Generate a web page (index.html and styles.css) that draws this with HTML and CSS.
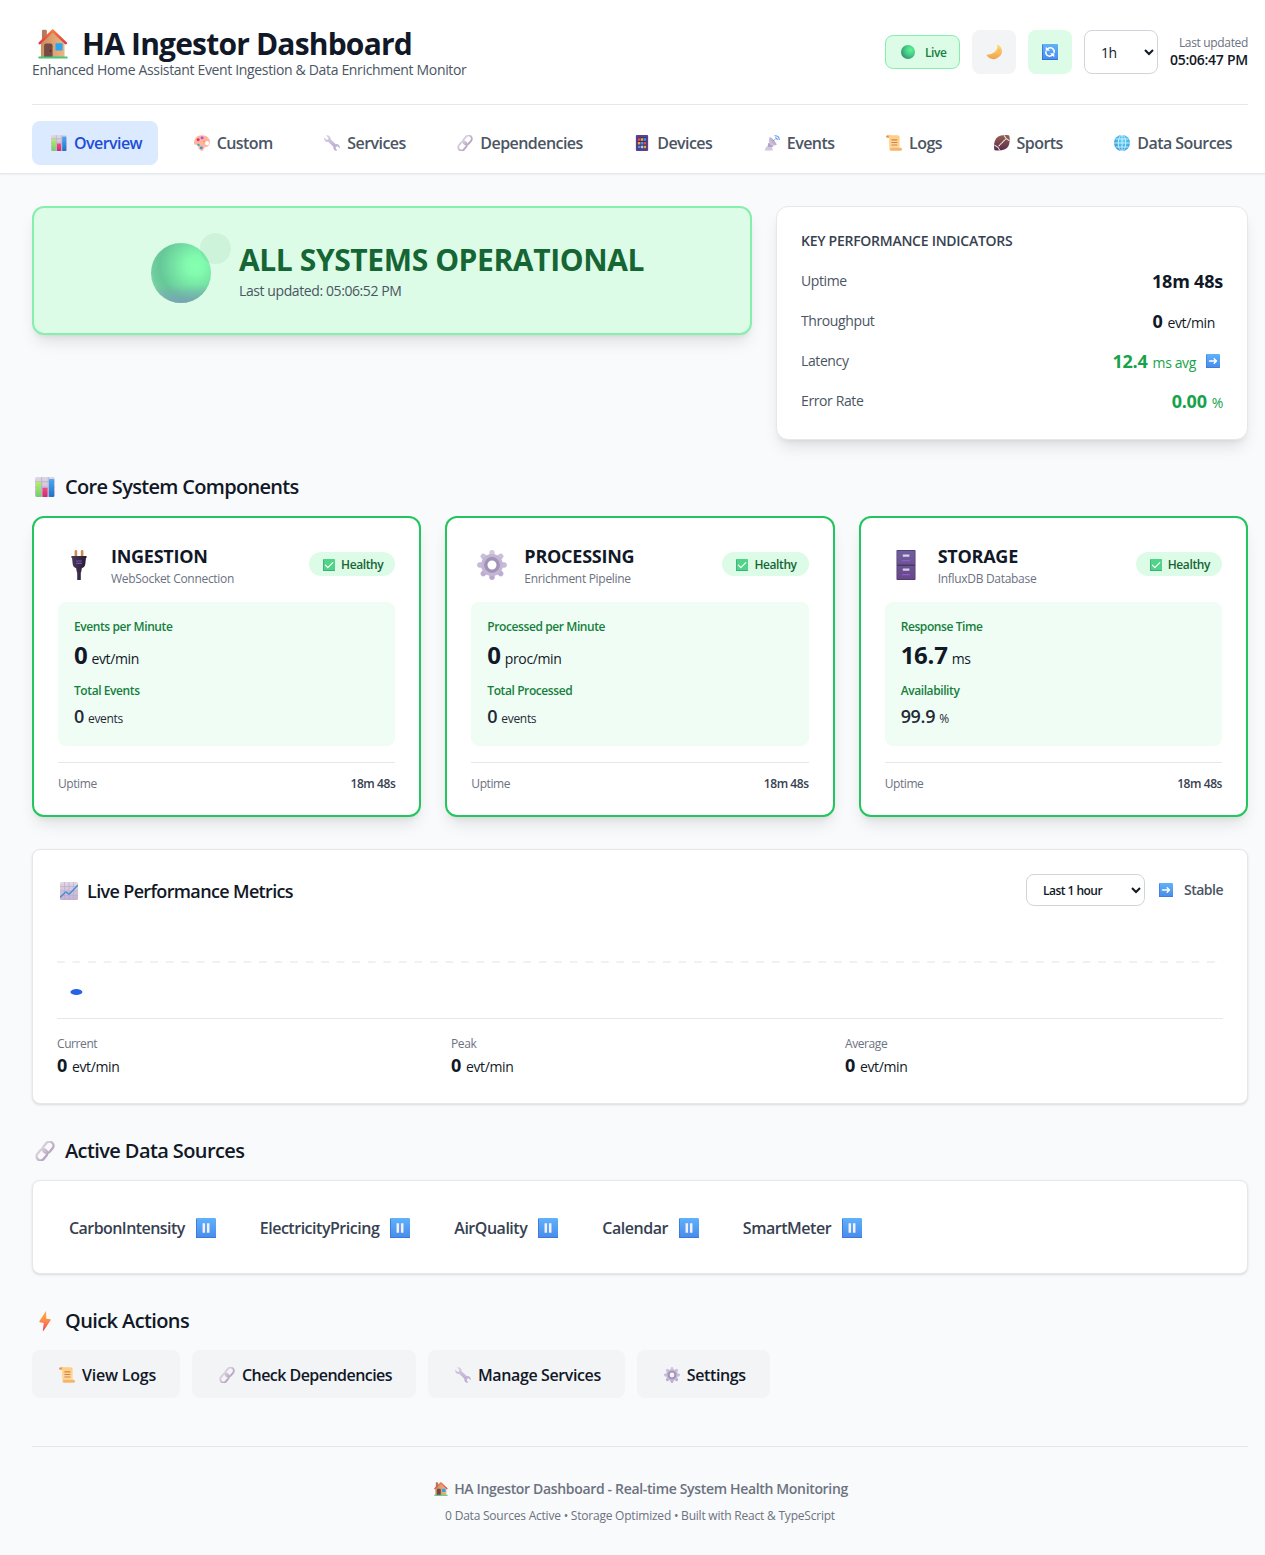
FILE: index.html
```
<!DOCTYPE html>
<html lang="en">
<head>
<meta charset="utf-8">
<title>HA Ingestor Dashboard</title>
<link rel="stylesheet" href="styles.css">
</head>
<body>
<svg class="sprite" aria-hidden="true">
  <defs>
    <linearGradient id="g-wall" x1="0" y1="0" x2="1" y2="0"><stop offset="0" stop-color="#c98f63"/><stop offset="1" stop-color="#eeb583"/></linearGradient>
    <linearGradient id="g-roof" x1="0" y1="0" x2="0" y2="1"><stop offset="0" stop-color="#f97a3d"/><stop offset="1" stop-color="#d93a40"/></linearGradient>
    <linearGradient id="g-green" x1="0" y1="0" x2="0" y2="1"><stop offset="0" stop-color="#b4ee6a"/><stop offset="1" stop-color="#6fd06c"/></linearGradient>
    <linearGradient id="g-pink" x1="0" y1="0" x2="0" y2="1"><stop offset="0" stop-color="#f5488a"/><stop offset="1" stop-color="#cf2b6b"/></linearGradient>
    <linearGradient id="g-blue" x1="0" y1="0" x2="0" y2="1"><stop offset="0" stop-color="#4aa9f5"/><stop offset="1" stop-color="#1f72c6"/></linearGradient>
    <linearGradient id="g-key" x1="0" y1="0" x2="0" y2="1"><stop offset="0" stop-color="#5fb2fb"/><stop offset="1" stop-color="#478bea"/></linearGradient>
    <linearGradient id="g-steel" x1="0" y1="0" x2="0" y2="1"><stop offset="0" stop-color="#d9d0e3"/><stop offset="1" stop-color="#b6a3cf"/></linearGradient>
    <linearGradient id="g-link" x1="0" y1="0" x2="0" y2="1"><stop offset="0" stop-color="#d8cfdc"/><stop offset="1" stop-color="#b9a5c4"/></linearGradient>
    <linearGradient id="g-paper" x1="0" y1="0" x2="0" y2="1"><stop offset="0" stop-color="#ffcb80"/><stop offset="1" stop-color="#ffdc9a"/></linearGradient>
    <linearGradient id="g-ball" x1="0" y1="0" x2="0" y2="1"><stop offset="0" stop-color="#95614f"/><stop offset="1" stop-color="#5b2a4c"/></linearGradient>
    <linearGradient id="g-moon" x1="0" y1="0" x2="0" y2="1"><stop offset="0" stop-color="#ffdf77"/><stop offset="1" stop-color="#f3a04f"/></linearGradient>
    <linearGradient id="g-zap" x1="0" y1="0" x2="0" y2="1"><stop offset="0" stop-color="#fbab3f"/><stop offset=".5" stop-color="#ff8b4a"/><stop offset="1" stop-color="#ee3f5c"/></linearGradient>
    <linearGradient id="g-cab" x1="0" y1="0" x2="0" y2="1"><stop offset="0" stop-color="#6e5f9e"/><stop offset="1" stop-color="#684788"/></linearGradient>
    <linearGradient id="g-plug" x1="0" y1="0" x2="1" y2="0"><stop offset="0" stop-color="#4a3a5c"/><stop offset="1" stop-color="#251c31"/></linearGradient>
    <linearGradient id="g-board" x1="0" y1="0" x2="0" y2="1"><stop offset="0" stop-color="#ded8e4"/><stop offset="1" stop-color="#c3b1d2"/></linearGradient>
    <radialGradient id="g-orb" cx=".74" cy=".38" r=".82"><stop offset="0" stop-color="#85ffb0"/><stop offset=".18" stop-color="#82fbae"/><stop offset=".72" stop-color="#66c798"/><stop offset=".86" stop-color="#6ecd9d"/><stop offset="1" stop-color="#93d9ab"/></radialGradient>
    <linearGradient id="g-orb-low" x1="0" y1="0" x2="0" y2="1"><stop offset=".7" stop-color="#7b9dba" stop-opacity="0"/><stop offset="1" stop-color="#7b9dba" stop-opacity=".85"/></linearGradient>
    <radialGradient id="g-orb-sm" cx=".68" cy=".35" r=".72"><stop offset="0" stop-color="#5df396"/><stop offset=".5" stop-color="#46cf86"/><stop offset="1" stop-color="#358f77"/></radialGradient>
    <radialGradient id="g-globe" cx=".55" cy=".35" r=".7"><stop offset="0" stop-color="#5fd6fc"/><stop offset="1" stop-color="#3196d6"/></radialGradient>
  </defs>

  <symbol id="i-house" viewBox="1 1.500 30.500 30">
    <path fill="#b37a5b" d="M5 3.200Q5 2 6.200 2h2.400Q10 2 10 3.200V13H5z"/>
    <path fill="url(#g-wall)" d="M4 16 16 4l12 12v14H4z"/>
    <path fill="none" stroke="url(#g-roof)" stroke-width="2.700" stroke-linejoin="round" stroke-linecap="round" d="M2.800 15.600 16 3l13.200 12.600"/>
    <path fill="#774b43" d="M7.200 18.200Q7.200 16 9.400 16h4.200q2.200 0 2.200 2.200V30H7.200z"/>
    <circle cx="13.800" cy="23.500" r=".8" fill="#3e2633"/>
    <rect x="18.800" y="15.800" width="7.200" height="7.400" rx=".9" fill="#27a7f0"/>
    <rect x="1.200" y="29.200" width="30" height="2" rx="1" fill="#43c879"/>
  </symbol>

  <symbol id="i-bars" viewBox="1 1 30 30">
    <rect x="1" y="1" width="30" height="30" rx="2.500" fill="url(#g-board)"/>
    <path stroke="#b6a5c4" stroke-width="1" d="M11 1v30M21 1v30M1 8h30M1 16h30M1 24h30"/>
    <rect x="2.500" y="8" width="7.500" height="23" rx="1" fill="url(#g-green)"/>
    <rect x="12.200" y="17" width="7.500" height="14" rx="1" fill="url(#g-pink)"/>
    <rect x="22" y="4" width="7.500" height="27" rx="1" fill="url(#g-blue)"/>
  </symbol>

  <symbol id="i-chart" viewBox="1 1 30 30">
    <rect x="1" y="1" width="30" height="30" rx="2.500" fill="url(#g-board)"/>
    <path stroke="#bba9c9" stroke-width="1.100" d="M8.500 1v30M16 1v30M23.500 1v30M1 8.500h30M1 16h30M1 23.500h30"/>
    <path fill="none" stroke="#3d8fd9" stroke-width="2.300" d="m1 27 9-9q1-.8 2 .2l3 2.600q1 .8 2-.2L31 6"/>
  </symbol>

  <symbol id="i-palette" viewBox="1 1 30.500 30.500">
    <path fill="#ffb4a0" fill-rule="evenodd" d="M15 1.500C6 2 1 9 1 17c0 2 2.500 3 4.500 2.500 3-.5 4.500 1 4 4-.6 4.500 2.500 7.500 7.500 7.500 1.700 0 2-2 2.500-4 .6-2 2.500-3 4.500-3 4.600 0 7.500-4.500 7.500-9.500C31.500 6.500 24 1 15 1.500zM24.500 13a4 4 0 1 1 0 7.200 4 4 0 0 1 0-7.200z"/>
    <circle cx="16.500" cy="6.500" r="2.800" fill="#b04fe0"/>
    <circle cx="9" cy="10" r="2.800" fill="#e02f6c"/>
    <circle cx="20" cy="13.500" r="2" fill="#f8a34a"/>
    <circle cx="9.500" cy="20" r="2.300" fill="#2fb8b4"/>
    <circle cx="15" cy="25.500" r="2.700" fill="#3e8fe6"/>
  </symbol>

  <symbol id="i-wrench" viewBox="0.500 1 31 31">
    <path fill="url(#g-steel)" d="M4.500 2 9 6.200 8.300 9.600 5 10.300.9 6C0 11 3.500 15 8.500 14.300L18.700 24c-.6 5 3 8 8 6.800L22.900 27l.8-3.300 3.300-.9 4 3.900c1-5-2.800-8.800-7.500-7.900L13.300 9C14 4.300 9.500.500 4.500 2z"/>
  </symbol>

  <symbol id="i-link" viewBox="0 0 32 32">
    <g fill="none" stroke-width="3.800" stroke="url(#g-link)" transform="rotate(-50 16 16)">
      <rect x="-1.500" y="9.500" width="19.500" height="13" rx="6.500"/>
      <rect x="14" y="9.500" width="19.500" height="13" rx="6.500"/>
      <path d="M10.500 16.100h11"/>
    </g>
  </symbol>

  <symbol id="i-phone" viewBox="1 1 30 30">
    <rect x="4.500" y="1" width="23" height="30" rx="2" fill="#57438f"/>
    <path fill="#3d2d63" d="M7.500 5.500h17v22h-17z"/>
    <path fill="#f0484f" d="M8.200 7h4.600v5H8.200zM19.200 14h4.600v5h-4.600z"/>
    <path fill="#f6a33d" d="M13.700 7h4.600v5h-4.600zM8.200 14h4.600v5H8.200zM19.200 21h4.600v5h-4.600z"/>
    <path fill="#3d9bf2" d="M19.200 7h4.600v5h-4.600zM13.700 14h4.600v5h-4.600zM8.200 21h4.600v5H8.200z"/>
    <path fill="#9ad3f5" d="M13.700 21h4.600v5h-4.600z"/>
  </symbol>

  <symbol id="i-dish" viewBox="1 0 31 32">
    <path fill="#d3c8de" d="M1.500 31 5 23.500h11L18.500 31z"/>
    <path fill="#b4a2c6" d="M9 16h8l1.500 8H7.500z"/>
    <path fill="#cdc1d8" d="M12 4Q7.500 14 13 19.500q6 4 13-.5z"/>
    <path fill="#bfb0ce" d="M12 4q9 4 14 15-4 1-7-1.500Q12.500 12 12 4z"/>
    <path stroke="#8d7da8" stroke-width="1.600" d="m18.500 12.500 4.500-4.500"/>
    <g fill="none" stroke="#5d9cf5" stroke-width="2.200"><path d="M22.500 5.500q4.500 0 4.500 4.500"/><path d="M21.500 1.500q9.500-.5 9.500 8.500"/></g>
  </symbol>

  <symbol id="i-scroll" viewBox="1 1 30.500 30">
    <path fill="#e9914f" d="M1 4q0-3 3-3h5v5H4Q1 6 1 4z"/>
    <path fill="url(#g-paper)" d="M4 1h19q4 0 4 4v22H10q-3 0-3-3V6q0-4-3-5z"/>
    <path fill="#f5b56c" d="M9 25h20q2.500 0 2.500 3t-3 3H11q-4 0-4-5 0 2 2 2z"/>
    <path stroke="#cf8459" stroke-width="2" stroke-linecap="round" d="M12 10h10M12 15h10M12 20h10"/>
  </symbol>

  <symbol id="i-ball" viewBox="1 1 30.500 30.500">
    <path fill="url(#g-ball)" d="M30 2C20 0 10 2 5.500 7 1 12.500 0 22 2 30c10 2 20 0 24.500-5C31 19.500 32 10 30 2z"/>
    <path fill="none" stroke="#e9dce5" stroke-width="2" d="M20 1.500Q23 9 30.500 12M1.700 20Q9 23 12 30.500"/>
    <path stroke="#fff" stroke-width="2" stroke-linecap="round" stroke-dasharray="1.800 2.400" d="m10.500 21.500 12-12"/>
  </symbol>

  <symbol id="i-globe" viewBox="1 1 30 30">
    <circle cx="16" cy="16" r="15" fill="url(#g-globe)"/>
    <g fill="none" stroke="#d8f3ff" stroke-width="1.600"><ellipse cx="16" cy="16" rx="7" ry="15"/><path d="M16 1v30M1 16h30M4 8.500h24M4 23.500h24"/></g>
  </symbol>

  <symbol id="i-moon" viewBox="1 1 30.500 30.500">
    <path fill="url(#g-moon)" d="M22 1.500c2.500 10-4 18.500-20.500 20C5 28.500 13 31.500 20 29c10-3.500 14-13 10-20.500-1.500-3-4-5.500-8-7z"/>
    <circle cx="26" cy="13" r="1.600" fill="#eeb25a"/><circle cx="19" cy="24" r="2" fill="#eeaf58"/>
  </symbol>

  <symbol id="i-refresh" viewBox="1 1 30 30">
    <rect x="1" y="1" width="30" height="30" rx="2" fill="url(#g-key)"/>
    <path fill="#2f69cf" d="M1 29.500h30V31H1zM1 2h1.300v28H1z"/>
    <g fill="none" stroke="#fff" stroke-width="2.800"><path d="M11 10.500Q16.500 6.500 21 9.500q4 3 2.500 8"/><path d="M21 21.500Q15.500 25.500 11 22.500q-4-3-2.500-8"/></g>
    <path fill="#fff" d="M8 6v7.500h8zM24 26v-7.500h-8z"/>
  </symbol>

  <symbol id="i-right" viewBox="1 1 30 30">
    <rect x="1" y="1" width="30" height="30" rx="2" fill="url(#g-key)"/>
    <path fill="#3f77d8" d="M1 29.500h30V31H1zM1 2h1.300v28H1z"/>
    <path fill="none" stroke="#fff" stroke-width="3" stroke-linecap="round" stroke-linejoin="round" d="M8.500 16h15M18.500 11l5 5-5 5"/>
  </symbol>

  <symbol id="i-pause" viewBox="1 1 30 30">
    <rect x="1" y="1" width="30" height="30" rx="2" fill="url(#g-key)"/>
    <path fill="#3f77d8" d="M1 29.500h30V31H1zM1 2h1.300v28H1z"/>
    <path fill="#f5efff" d="M10.800 9h3.800v14h-3.800zM17.400 9h3.800v14h-3.800z"/>
  </symbol>

  <symbol id="i-check" viewBox="1 1 30 30">
    <rect x="1" y="1" width="30" height="30" rx="1.500" fill="#52d38a"/>
    <path fill="#3da374" d="M1 29h30v2H1zM1 2h1.500v28H1z"/>
    <path fill="none" stroke="#fff" stroke-width="3" stroke-linecap="round" stroke-linejoin="round" d="m7 16.500 6 6.200L25.500 10"/>
  </symbol>

  <symbol id="i-plug" viewBox="1 1 30 30">
    <path fill="#c98a58" d="M11.600 2q0-1 1.300-1t1.300 1v7h-2.600zM17.800 2q0-1 1.300-1t1.300 1v7h-2.600z"/>
    <path fill="url(#g-plug)" d="M9 7h14q.8 0 .8.900t-.8.900l-.7 6.200q-.4 3.300-3.500 4.200h-5.600q-3.100-.9-3.500-4.200L9 8.800q-.8 0-.8-.9T9 7zM13.100 19h5.800l-.8 4.500h-4.200zM14.200 23.500h3.600V31h-3.600z"/>
    <path stroke="#7a52b5" stroke-width="1.200" stroke-linecap="round" d="M13.500 12h5M13.500 14.300h5"/>
  </symbol>

  <symbol id="i-gear" viewBox="1 1 30 30">
    <g stroke-width="5.400" stroke-linecap="round"><path stroke="#d2c9de" d="M16 3.800v3"/><path stroke="#b9a8d3" d="M16 25.200v3"/><path stroke="#c7bbd9" d="M3.800 16h3M25.200 16h3"/><path stroke="#cabfdb" d="m7.300 7.300 2.200 2.200M24.700 7.300l-2.200 2.200"/><path stroke="#bcadd4" d="m7.300 24.700 2.200-2.200M24.700 24.700l-2.200-2.200"/></g>
    <circle cx="16" cy="16" r="8.200" fill="none" stroke="#c3b6d5" stroke-width="5.500"/>
    <circle cx="16" cy="16" r="6.200" fill="none" stroke="#a292b5" stroke-width="3.400"/>
  </symbol>

  <symbol id="i-cabinet" viewBox="1 1 30 30">
    <rect x="6.500" y="1" width="19" height="30" rx=".8" fill="#4b3868"/>
    <path fill="url(#g-cab)" d="M7.200 1.700h17.600v13.700H7.200zM7.200 17h17.600v13.300H7.200z"/>
    <path fill="#d9d0e6" d="M12.800 5.500h6.600v2.200h-6.600zM12.800 19.500h6.600v2.200h-6.600z"/>
    <path fill="#8f5dd0" d="M12 11h8v1.300h-8zM12 25h8v1.300h-8z"/>
  </symbol>

  <symbol id="i-zap" viewBox="1 1 30 30">
    <path fill="url(#g-zap)" d="M17.500 1 7.500 16.500q-.4 1 .6 1.500l6 1-1.500 12 1.200-.2L24.500 14.800q.5-1.200-.6-1.400L18 12.500z"/>
  </symbol>

  <symbol id="i-orb" viewBox="0 0 60 60"><circle cx="30" cy="30" r="30" fill="url(#g-orb)"/><circle cx="30" cy="30" r="30" fill="url(#g-orb-low)"/></symbol>
  <symbol id="i-orb-sm" viewBox="1 1 30 30"><circle cx="16" cy="16" r="15" fill="url(#g-orb-sm)"/></symbol>
</svg>

<header class="header">
  <div class="header-top">
    <div>
      <h1 class="title"><svg class="ico ico-30"><use href="#i-house"/></svg><span>HA Ingestor Dashboard</span></h1>
      <p class="subtitle">Enhanced Home Assistant Event Ingestion &amp; Data Enrichment Monitor</p>
    </div>
    <div class="controls">
      <div class="live"><svg class="ico ico-14"><use href="#i-orb-sm"/></svg><span>Live</span></div>
      <button class="icon-btn"><svg class="ico ico-16"><use href="#i-moon"/></svg></button>
      <button class="icon-btn icon-btn-on"><svg class="ico ico-16"><use href="#i-refresh"/></svg></button>
      <select class="select select-range"><option>1h</option></select>
      <div class="updated"><div class="updated-label">Last updated</div><div class="updated-time">05:06:47 PM</div></div>
    </div>
  </div>
  <nav class="tabs">
    <a class="tab tab-active"><svg class="ico ico-16"><use href="#i-bars"/></svg>Overview</a>
    <a class="tab"><svg class="ico ico-16"><use href="#i-palette"/></svg>Custom</a>
    <a class="tab"><svg class="ico ico-16"><use href="#i-wrench"/></svg>Services</a>
    <a class="tab"><svg class="ico ico-16"><use href="#i-link"/></svg>Dependencies</a>
    <a class="tab"><svg class="ico ico-16"><use href="#i-phone"/></svg>Devices</a>
    <a class="tab"><svg class="ico ico-16"><use href="#i-dish"/></svg>Events</a>
    <a class="tab"><svg class="ico ico-16"><use href="#i-scroll"/></svg>Logs</a>
    <a class="tab"><svg class="ico ico-16"><use href="#i-ball"/></svg>Sports</a>
    <a class="tab"><svg class="ico ico-16"><use href="#i-globe"/></svg>Data Sources</a>
  </nav>
</header>

<main class="main">
  <section class="hero">
    <div class="status">
      <div class="orb"><svg class="orb-ball"><use href="#i-orb"/></svg><span class="orb-ping"></span></div>
      <div>
        <h2 class="status-title">ALL SYSTEMS OPERATIONAL</h2>
        <p class="status-sub">Last updated: 05:06:52 PM</p>
      </div>
    </div>
    <div class="kpi">
      <h3 class="kpi-title">KEY PERFORMANCE INDICATORS</h3>
      <div class="kpi-row"><span class="kpi-label">Uptime</span><span class="kpi-value">18m 48s</span></div>
      <div class="kpi-row"><span class="kpi-label">Throughput</span><span class="kpi-value kpi-gap">0 <small>evt/min</small></span></div>
      <div class="kpi-row"><span class="kpi-label">Latency</span><span class="kpi-value good">12.4 <small>ms avg</small><svg class="ico ico-14 trend"><use href="#i-right"/></svg></span></div>
      <div class="kpi-row"><span class="kpi-label">Error Rate</span><span class="kpi-value good">0.00 <small>%</small></span></div>
    </div>
  </section>

  <section class="section">
    <h2 class="heading"><svg class="ico ico-20"><use href="#i-bars"/></svg>Core System Components</h2>
    <div class="cards">
      <article class="card">
        <div class="card-head">
          <svg class="ico ico-32"><use href="#i-plug"/></svg>
          <div class="card-name"><h3>INGESTION</h3><p>WebSocket Connection</p></div>
          <span class="badge"><svg class="ico ico-12"><use href="#i-check"/></svg>Healthy</span>
        </div>
        <div class="stats">
          <div class="stat-label">Events per Minute</div><div class="stat-main">0 <small>evt/min</small></div>
          <div class="stat-label stat-second">Total Events</div><div class="stat-sub">0 <small>events</small></div>
        </div>
        <div class="card-foot"><span>Uptime</span><b>18m 48s</b></div>
      </article>
      <article class="card">
        <div class="card-head">
          <svg class="ico ico-32"><use href="#i-gear"/></svg>
          <div class="card-name"><h3>PROCESSING</h3><p>Enrichment Pipeline</p></div>
          <span class="badge"><svg class="ico ico-12"><use href="#i-check"/></svg>Healthy</span>
        </div>
        <div class="stats">
          <div class="stat-label">Processed per Minute</div><div class="stat-main">0 <small>proc/min</small></div>
          <div class="stat-label stat-second">Total Processed</div><div class="stat-sub">0 <small>events</small></div>
        </div>
        <div class="card-foot"><span>Uptime</span><b>18m 48s</b></div>
      </article>
      <article class="card">
        <div class="card-head">
          <svg class="ico ico-32"><use href="#i-cabinet"/></svg>
          <div class="card-name"><h3>STORAGE</h3><p>InfluxDB Database</p></div>
          <span class="badge"><svg class="ico ico-12"><use href="#i-check"/></svg>Healthy</span>
        </div>
        <div class="stats">
          <div class="stat-label">Response Time</div><div class="stat-main">16.7 <small>ms</small></div>
          <div class="stat-label stat-second">Availability</div><div class="stat-sub">99.9 <small>%</small></div>
        </div>
        <div class="card-foot"><span>Uptime</span><b>18m 48s</b></div>
      </article>
    </div>
  </section>

  <section class="panel metrics">
    <div class="metrics-head">
      <h3 class="metrics-title"><svg class="ico ico-18"><use href="#i-chart"/></svg>Live Performance Metrics</h3>
      <div class="metrics-tools">
        <select class="select select-hours"><option>Last 1 hour</option></select>
        <span class="stable"><svg class="ico ico-14"><use href="#i-right"/></svg>Stable</span>
      </div>
    </div>
    <svg class="plot" viewBox="0 0 1166 80" preserveAspectRatio="none">
      <line x1="0" y1="40" x2="1166" y2="40" stroke="#f0f1f3" stroke-width="2" stroke-dasharray="7.770 7.770"/>
      <ellipse cx="19.400" cy="70" rx="6" ry="3" fill="#2563eb"/>
    </svg>
    <div class="summary">
      <div><div class="sum-label">Current</div><div class="sum-value">0 <small>evt/min</small></div></div>
      <div><div class="sum-label">Peak</div><div class="sum-value">0 <small>evt/min</small></div></div>
      <div><div class="sum-label">Average</div><div class="sum-value">0 <small>evt/min</small></div></div>
    </div>
  </section>

  <section class="section">
    <h2 class="heading heading-wide"><svg class="ico ico-20"><use href="#i-link"/></svg>Active Data Sources</h2>
    <div class="panel sources">
      <div class="source"><span>CarbonIntensity</span><svg class="ico ico-20"><use href="#i-pause"/></svg></div>
      <div class="source"><span>ElectricityPricing</span><svg class="ico ico-20"><use href="#i-pause"/></svg></div>
      <div class="source"><span>AirQuality</span><svg class="ico ico-20"><use href="#i-pause"/></svg></div>
      <div class="source"><span>Calendar</span><svg class="ico ico-20"><use href="#i-pause"/></svg></div>
      <div class="source"><span>SmartMeter</span><svg class="ico ico-20"><use href="#i-pause"/></svg></div>
    </div>
  </section>

  <section class="section">
    <h2 class="heading heading-wide"><svg class="ico ico-20"><use href="#i-zap"/></svg>Quick Actions</h2>
    <div class="actions">
      <button class="action"><svg class="ico ico-16"><use href="#i-scroll"/></svg>View Logs</button>
      <button class="action"><svg class="ico ico-16"><use href="#i-link"/></svg>Check Dependencies</button>
      <button class="action"><svg class="ico ico-16"><use href="#i-wrench"/></svg>Manage Services</button>
      <button class="action"><svg class="ico ico-16"><use href="#i-gear"/></svg>Settings</button>
    </div>
  </section>

  <footer class="footer">
    <p class="foot-main"><svg class="ico ico-14"><use href="#i-house"/></svg>HA Ingestor Dashboard - Real-time System Health Monitoring</p>
    <p class="foot-sub">0 Data Sources Active • Storage Optimized • Built with React &amp; TypeScript</p>
  </footer>
</main>
</body>
</html>
```
FILE: styles.css
```
* { box-sizing: border-box; margin: 0; padding: 0; }

body {
  background: #f9fafb;
  color: #111827;
  font-family: "Open Sans", "Noto Sans", sans-serif;
  font-size: 16px;
  line-height: 24px;
  letter-spacing: -0.026em;
  overflow: hidden;
}

h1, h2, h3 { font-weight: 600; }
small { font-weight: 400; line-height: 1; letter-spacing: -0.026em; }
button, select { font: inherit; letter-spacing: inherit; color: inherit; border: 0; }

.sprite { position: absolute; width: 0; height: 0; }

/* Icons keep a wider advance than their artwork, like emoji glyphs. */
.ico { flex: none; display: block; }
.ico-12 { width: 12px; height: 12px; margin: 0 3px 0 2px; }
.ico-14 { width: 14px; height: 14px; margin: 0 3px 0 2px; }
.ico-16 { width: 16px; height: 16px; margin: 0 3px; }
.ico-18 { width: 18px; height: 18px; margin: 0 4px 0 3px; }
.ico-20 { width: 20px; height: 20px; margin: 0 4px 0 3px; }
.ico-30 { width: 30px; height: 30px; margin: 0 5px 0 6px; }
.ico-32 { width: 30px; height: 30px; margin: 2px 5px 0 6px; }

.header {
  background: #fff;
  border-bottom: 1px solid #e5e7eb;
  box-shadow: 0 1px 2px rgba(0, 0, 0, .05);
  padding: 24px 17px 8px 32px;
}
.header-top {
  display: flex;
  justify-content: space-between;
  align-items: center;
  padding-bottom: 24px;
  border-bottom: 1px solid #e5e7eb;
}
.title {
  display: flex;
  align-items: center;
  gap: 9px;
  height: 36px;
  padding-top: 3px;
  font-size: 30px;
  line-height: 33px;
  font-weight: 700;
  letter-spacing: -0.027em;
}
.subtitle { font-size: 14px; line-height: 20px; color: #4b5563; letter-spacing: -0.0245em; }

.controls { display: flex; align-items: center; gap: 12px; }
.live {
  display: flex;
  align-items: center;
  gap: 7px;
  width: 75px;
  height: 34px;
  padding-left: 13px;
  border: 1px solid #86efac;
  border-radius: 8px;
  background: #dcfce7;
  color: #15803d;
  font-size: 12px;
  font-weight: 600;
}
.live span { padding-top: 2px; }
.icon-btn {
  display: flex;
  align-items: center;
  justify-content: center;
  width: 44px;
  height: 44px;
  border-radius: 8px;
  background: #f3f4f6;
}
.icon-btn-on { background: #dcfce7; }
.select { background: #fff; border: 1px solid #d1d5db; border-radius: 8px; }
.select-range { width: 74px; height: 44px; padding-left: 12px; font-size: 14px; }
.select-hours { width: 119px; height: 32px; padding-left: 12px; font-size: 12px; font-weight: 600; letter-spacing: -0.045em; }
.updated { text-align: right; }
.updated-label { padding-top: 2px; font-size: 12px; line-height: 14px; color: #6b7280; letter-spacing: -0.028em; }
.updated-time { font-size: 14px; line-height: 20px; font-weight: 600; letter-spacing: -0.018em; }

.tabs { display: flex; justify-content: space-between; padding-top: 16px; }
.tab {
  display: flex;
  align-items: center;
  gap: 4px;
  height: 44px;
  padding: 0 16px;
  border-radius: 8px;
  color: #4b5563;
  font-weight: 600;
  letter-spacing: -0.035em;
}
.tab-active { background: #dbeafe; color: #1d4ed8; }

.main { padding: 32px 17px 32px 32px; }
.hero { display: grid; grid-template-columns: repeat(5, 1fr); gap: 24px; align-items: start; }
.status {
  grid-column: span 3;
  display: flex;
  align-items: center;
  justify-content: center;
  gap: 17px;
  height: 129px;
  border: 2px solid #86efac;
  border-radius: 12px;
  background: #dcfce7;
  box-shadow: 0 10px 15px -3px rgba(0, 0, 0, .1), 0 4px 6px -4px rgba(0, 0, 0, .1);
}
.orb { position: relative; width: 82px; padding: 5px 0 0 11px; }
.orb-ball { display: block; width: 60px; height: 60px; }
.orb-ping { position: absolute; left: 60px; top: -5px; width: 31px; height: 31px; border-radius: 50%; background: rgba(34, 150, 94, .08); }
.status-title { padding-top: 2px; font-size: 30px; line-height: 34px; font-weight: 700; color: #166534; letter-spacing: -0.0133em; }
.status-sub { font-size: 14px; line-height: 20px; margin-top: 4px; color: #4b5563; letter-spacing: -0.029em; }

.kpi {
  grid-column: span 2;
  display: flex;
  flex-direction: column;
  gap: 12px;
  padding: 24px;
  border: 1px solid #e5e7eb;
  border-radius: 12px;
  background: #fff;
  box-shadow: 0 10px 15px -3px rgba(0, 0, 0, .1), 0 4px 6px -4px rgba(0, 0, 0, .1);
}
.kpi-title { margin-bottom: 4px; font-size: 14px; line-height: 20px; color: #374151; letter-spacing: -0.019em; }
.kpi-row { display: flex; justify-content: space-between; align-items: center; height: 28px; }
.kpi-label { font-size: 14px; line-height: 20px; color: #4b5563; letter-spacing: -0.028em; }
.kpi-value { display: flex; align-items: baseline; gap: 5px; padding-top: 1px; font-size: 18px; line-height: 27px; font-weight: 700; letter-spacing: -0.012em; }
.kpi-value small { font-size: 14px; }
.kpi-gap { padding-right: 8px; }
.good { color: #16a34a; }
.trend { margin-left: 5px; margin-top: -1px; align-self: center; }

.section { margin-top: 32px; }
.heading { display: flex; align-items: center; gap: 6px; margin-bottom: 16px; padding-top: 2px; font-size: 20px; line-height: 26px; letter-spacing: -0.034em; }
.heading-wide { letter-spacing: -0.03em; }
.cards { display: grid; grid-template-columns: repeat(3, 1fr); gap: 24px; }
.card {
  padding: 24px;
  border: 2px solid #22c55e;
  border-radius: 12px;
  background: #fff;
  box-shadow: 0 10px 15px -3px rgba(0, 0, 0, .1), 0 4px 6px -4px rgba(0, 0, 0, .1);
}
.card-head { display: flex; align-items: center; gap: 12px; height: 44px; }
.card-name { flex: 1; }
.card-name h3 { font-size: 18px; line-height: 28px; font-weight: 700; letter-spacing: -0.014em; }
.card-name p { padding-top: 2px; font-size: 12px; line-height: 14px; color: #6b7280; letter-spacing: -0.025em; }
.badge {
  display: flex;
  align-items: center;
  gap: 3px;
  height: 24px;
  padding: 1px 12px 0;
  border-radius: 12px;
  background: #dcfce7;
  color: #166534;
  font-size: 12px;
  font-weight: 600;
  letter-spacing: -0.033em;
}
.stats { margin-top: 16px; padding: 16px; border-radius: 8px; background: #f0fdf4; }
.stat-label { padding-top: 2px; font-size: 12px; line-height: 14px; font-weight: 600; color: #15803d; margin-bottom: 4px; letter-spacing: -0.034em; }
.stat-second { margin-top: 12px; }
.stat-main, .stat-sub, .sum-value { display: flex; align-items: baseline; gap: 4px; }
.stat-main { padding-top: 2px; font-size: 24px; line-height: 30px; font-weight: 700; letter-spacing: -0.011em; }
.stat-main small { font-size: 14px; }
.stat-sub { font-size: 18px; line-height: 28px; font-weight: 600; color: #1f2937; letter-spacing: -0.018em; }
.stat-sub small { font-size: 12px; }
.card-foot {
  display: flex;
  justify-content: space-between;
  margin-top: 16px;
  padding-top: 14px;
  border-top: 1px solid #e5e7eb;
  font-size: 12px;
  line-height: 14px;
  color: #6b7280;
}
.card-foot b { font-weight: 600; color: #374151; letter-spacing: -0.036em; }

.panel { padding: 24px; border: 1px solid #e5e7eb; border-radius: 8px; background: #fff; box-shadow: 0 1px 3px rgba(0, 0, 0, .1), 0 1px 2px -1px rgba(0, 0, 0, .1); }
.metrics { margin-top: 32px; }
.metrics-head { display: flex; justify-content: space-between; align-items: center; height: 32px; margin-bottom: 16px; }
.metrics-title { display: flex; align-items: center; gap: 5px; padding-top: 1px; font-size: 18px; line-height: 28px; letter-spacing: -0.036em; }
.metrics-tools { display: flex; align-items: center; gap: 12px; }
.stable { display: flex; align-items: center; gap: 8px; font-size: 14px; line-height: 20px; font-weight: 600; color: #4b5563; letter-spacing: -0.037em; }
.plot { display: block; width: 100%; height: 80px; }
.summary { display: grid; grid-template-columns: repeat(3, 1fr); gap: 16px; margin-top: 16px; padding-top: 16px; border-top: 1px solid #e5e7eb; }
.sum-label { padding-top: 2px; font-size: 12px; line-height: 14px; color: #6b7280; }
.sum-value { gap: 5px; font-size: 18px; line-height: 28px; font-weight: 700; }
.sum-value small { font-size: 14px; }

.sources { display: flex; gap: 16px; }
.source { display: flex; align-items: center; gap: 8px; height: 44px; padding: 1px 12px 0; font-weight: 600; color: #374151; letter-spacing: -0.03em; }
.source:first-child { letter-spacing: -0.035em; }

.actions { display: flex; gap: 12px; }
.action { display: flex; align-items: center; gap: 4px; height: 48px; padding: 1px 24px 0; border-radius: 8px; background: #f3f4f6; font-weight: 600; letter-spacing: -0.024em; }
.action:nth-child(1) { letter-spacing: -0.014em; }
.action:nth-child(2) { letter-spacing: -0.034em; }

.footer { margin-top: 48px; padding-top: 32px; border-top: 1px solid #e5e7eb; text-align: center; color: #6b7280; }
.foot-main { display: flex; justify-content: center; align-items: center; gap: 3px; font-size: 14px; line-height: 20px; font-weight: 600; letter-spacing: -0.024em; }
.foot-sub { margin-top: 8px; padding-top: 2px; font-size: 12px; line-height: 14px; letter-spacing: -0.018em; }
```
